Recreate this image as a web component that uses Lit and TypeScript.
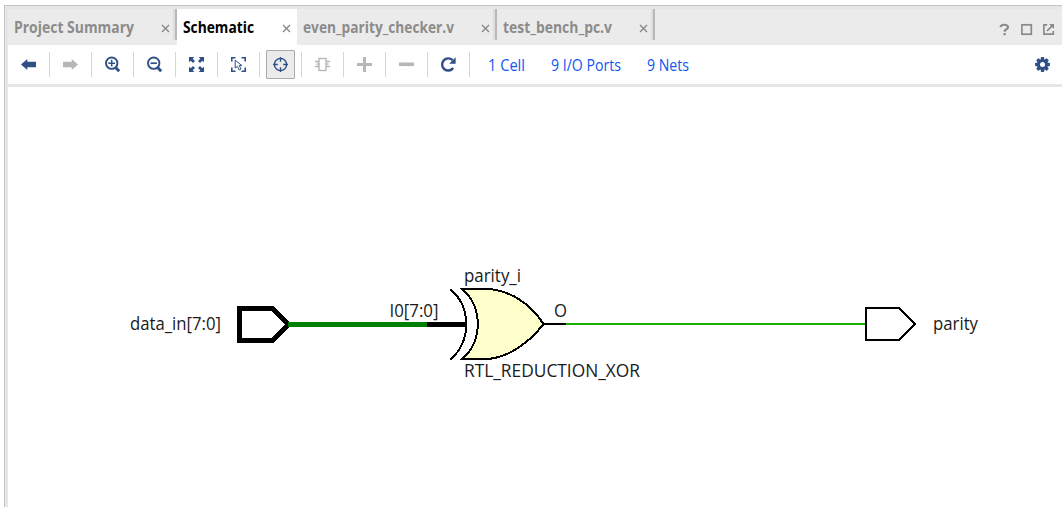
import { LitElement, html, svg, css } from "lit";
import { customElement } from "lit/decorators.js";
import { classMap } from "lit/directives/class-map.js";

const NAVY = "#2f4f87";
const GREY = "#b7b7b7";

/** Single line label fitted to a fixed advance width. */
const label = (text: string, width: number) => html`
  <svg class="label" width=${width + 2} height="24">
    <text x="0" y="18" textLength=${width} lengthAdjust="spacingAndGlyphs">${text}</text>
  </svg>`;

const icon = (body: unknown) => html`<svg class="icon" width="17" height="17" viewBox="0 0 17 17">${body}</svg>`;

const lens = svg`
  <circle cx="7.7" cy="7.2" r="5.7" fill="none" stroke=${NAVY} stroke-width="1.9"/>
  <path d="M11.8 11.8 L15.2 15.2" stroke=${NAVY} stroke-width="3"/>`;

const icons = {
  back: svg`<path d="M1 8.5 L7.3 3 V5.8 H16 V11.2 H7.3 V14 Z" fill=${NAVY}/>`,
  forward: svg`<path d="M16 8.5 L9.7 3 V5.8 H1 V11.2 H9.7 V14 Z" fill=${GREY}/>`,
  zoomIn: svg`${lens}<path d="M4.3 7.2 H11.1 M7.7 3.8 V10.6" stroke=${NAVY} stroke-width="1.5"/>`,
  zoomOut: svg`${lens}<path d="M4.5 7.2 H10.9" stroke=${NAVY} stroke-width="1.7"/>`,
  fit: svg`<path fill=${NAVY} d="M1 1H6.3L4.7 2.7L7 5L5 7L2.7 4.7L1 6.3Z M16 1V6.3L14.3 4.7L12 7L10 5L12.3 2.7L10.7 1Z M1 16V10.7L2.7 12.3L5 10L7 12L4.7 14.3L6.3 16Z M16 16H10.7L12.3 14.3L10 12L12 10L14.3 12.3L16 10.7Z"/>`,
  select: svg`
    <path d="M1.8 5.5V1.8H5.5 M11.5 1.8H15.2V5.5 M15.2 11.5V15.2H11.5 M5.5 15.2H1.8V11.5" fill="none" stroke=${NAVY} stroke-width="1.6"/>
    <path d="M5.2 4.2V12L7.3 10.4L9.2 14L11 13L9.2 9.6H11.9Z" fill="#fff" stroke=${NAVY} stroke-width="1"/>`,
  locate: svg`
    <circle cx="8.5" cy="8.5" r="6.1" fill="none" stroke=${NAVY} stroke-width="1.4"/>
    <path d="M8.5 1V5.8 M8.5 11.2V16 M1 8.5H5.8 M11.2 8.5H16" stroke=${NAVY} stroke-width="1.4"/>`,
  cell: svg`
    <rect x="5" y="2.5" width="7" height="12" fill="none" stroke=${GREY} stroke-width="1.4"/>
    <path d="M1 5.5H5 M1 10.5H5 M12 5.5H16 M12 10.5H16 M2.5 8H5 M12 8H14.5" stroke=${GREY} stroke-width="1.4"/>`,
  plus: svg`<path d="M1 8.5H16 M8.5 1V16" stroke=${GREY} stroke-width="3"/>`,
  minus: svg`<path d="M1 8.3H16" stroke=${GREY} stroke-width="3.6"/>`,
  refresh: svg`
    <path d="M13.2 12 A6.1 6.1 0 1 1 12.6 4.2" fill="none" stroke=${NAVY} stroke-width="2.4"/>
    <path d="M15.6 1.3V7.7H9.2Z" fill=${NAVY}/>`,
};

const tools: { name: string; body: unknown; on?: boolean }[] = [
  { name: "Back", body: icons.back },
  { name: "Forward", body: icons.forward },
  { name: "Zoom in", body: icons.zoomIn },
  { name: "Zoom out", body: icons.zoomOut },
  { name: "Fit", body: icons.fit },
  { name: "Select area", body: icons.select },
  { name: "Auto-fit selection", body: icons.locate, on: true },
  { name: "Expand cell", body: icons.cell },
  { name: "Add", body: icons.plus },
  { name: "Remove", body: icons.minus },
  { name: "Regenerate", body: icons.refresh },
];

@customElement("schematic-tabs")
class SchematicTabs extends LitElement {
  static styles = css`
    :host { display: flex; height: 36px; background: #ebebeb; }
    .tab { display: flex; box-sizing: border-box; height: 36px; padding-left: 6px; color: #8b8b8b; }
    .tab.active { background: #fff; color: #000; padding-right: 6px; }
    .label { display: block; margin-top: 6px; overflow: visible; font: bold 15.5px "Open Sans", sans-serif; fill: currentColor; }
    .fill { flex: 1; }
    .close { display: block; margin-top: 15px; width: 9px; height: 9px; }
    .rule { width: 2px; height: 31px; margin-left: 3px; background: #b9b9b9; border-left: 2px solid #dedede; }
    .s { width: 169px; } .c { width: 120px; } .e { width: 200px; } .t { width: 158px; }
    .controls { display: flex; gap: 9px; margin-left: auto; padding: 14px 7px 0 0; }
  `;
  render() {
    const tabs = [
      { text: "Project Summary", w: 120, size: "s" },
      { text: "Schematic", w: 71, size: "c", active: true },
      { text: "even_parity_checker.v", w: 151, size: "e" },
      { text: "test_bench_pc.v", w: 109, size: "t" },
    ];
    return html`
      ${tabs.map((t) => html`
        <div class=${classMap({ tab: true, active: !!t.active, [t.size]: true })}>
          ${label(t.text, t.w)}
          <span class="fill"></span>
          <svg class="close" viewBox="0 0 9 9"><path d="M1 1L8 8M8 1L1 8" stroke="#858585" stroke-width="1.3"/></svg>
          ${t.active ? "" : html`<span class="rule"></span>`}
        </div>`)}
      <div class="controls">
        <svg width="13" height="13" viewBox="0 0 13 13"><path d="M2.6 4.3C2.6 0.9 10 0.9 10 4.2C10 6.3 6.6 6.2 6.6 8.7M6.6 10V12.2" fill="none" stroke="#8a8a8a" stroke-width="2.2"/></svg>
        <svg width="13" height="13" viewBox="0 0 13 13"><rect x="1.9" y="1.8" width="9.4" height="9.4" fill="none" stroke="#8a8a8a" stroke-width="1.7"/></svg>
        <svg width="13" height="13" viewBox="0 0 13 13"><path d="M5.2 1.8H1.9V11.2H11.3V8M5 8L9.8 3.2" fill="none" stroke="#8a8a8a" stroke-width="1.7"/><path d="M7 1H12V6Z" fill="#8a8a8a"/></svg>
      </div>`;
  }
}

@customElement("schematic-toolbar")
class SchematicToolbar extends LitElement {
  static styles = css`
    :host { display: flex; height: 39px; background: #fff; border-bottom: 3px solid #e6e6e6; }
    .cell { display: flex; align-items: center; justify-content: center; width: 41px; height: 25px; margin-top: 7px; border-right: 1px solid #d6d6d6; }
    .tool { display: flex; align-items: center; justify-content: center; flex: none; box-sizing: border-box; width: 29px; height: 29px; }
    .tool.on { background: #ebebeb; border: 1px solid #aaa; border-radius: 1px; }
    .icon { display: block; }
    .links { display: flex; gap: 24px; margin: 8px 0 0 18px; color: #0f57f0; }
    .label { display: block; overflow: visible; font: 15.5px "Open Sans", sans-serif; fill: currentColor; }
    .gear { display: block; margin: 12px 12px 0 auto; }
  `;
  render() {
    return html`
      ${tools.map((t) => html`
        <div class="cell"><span class=${classMap({ tool: true, on: !!t.on })} aria-label=${t.name}>${icon(t.body)}</span></div>`)}
      <div class="links">${label("1 Cell", 37)}${label("9 I/O Ports", 70)}${label("9 Nets", 42)}</div>
      <svg class="gear" width="15" height="15" viewBox="0 0 15 15">
        <g fill=${NAVY}>
          ${[0, 45, 90, 135].map((a) => svg`<rect x="5.8" y="0.1" width="3.4" height="14.8" rx="0.7" transform="rotate(${a} 7.5 7.5)"/>`)}
          <circle cx="7.5" cy="7.5" r="5.5"/>
        </g>
        <circle cx="7.5" cy="7.5" r="2.5" fill="#fff"/>
      </svg>`;
  }
}

@customElement("schematic-canvas")
class SchematicCanvas extends LitElement {
  static styles = css`
    :host { display: block; flex: 1; background: #fff; }
    .sheet { display: block; }
    .text { font: 17.5px "Open Sans", sans-serif; fill: #1a1a1a; }
    .line { fill: none; stroke: #000; stroke-width: 2; }
    .bus { stroke-width: 5; }
    .busnet { stroke: #008000; }
    .net { stroke: #1cb000; }
    .body { fill: #ffffcc; }
  `;
  render() {
    const t = (text: string, x: number, y: number, w: number) =>
      svg`<text class="text" x=${x} y=${y} textLength=${w} lengthAdjust="spacingAndGlyphs">${text}</text>`;
    return html`
      <svg class="sheet" width="1054" height="420" viewBox="8 87 1054 420">
        <g shape-rendering="crispEdges">
          <path class="line bus" d="M239.5 308.5H272.5L288 324.5L272.5 340.5H239.5Z"/>
          <path class="line bus busnet" d="M288 324.5H427"/>
          <path class="line bus" d="M427 324.5H466"/>
          <path class="line body" d="M462 289H487C512 290 532 306 543.5 324C530 342 508 358 487 359H462C483 342 483 306 462 289Z"/>
          <path class="line" d="M450.5 289.5C471.5 307 471.5 341 450.5 359.5"/>
          <path class="line" d="M543 324H566"/>
          <path class="line net" d="M566 324H865"/>
          <path class="line" d="M866 308H899L915 324L899 340H866Z"/>
        </g>
        ${t("data_in[7:0]", 130, 330, 91)}
        ${t("I0[7:0]", 389.5, 317, 49)}
        ${t("parity_i", 464, 282, 57)}
        ${t("RTL_REDUCTION_XOR", 464, 377, 176)}
        ${t("O", 554, 317, 13)}
        ${t("parity", 933, 330, 45)}
      </svg>`;
  }
}

@customElement("app-root")
class AppRoot extends LitElement {
  static styles = css`
    :host { display: block; box-sizing: border-box; height: 507px; padding: 5px 0 0 4px; background: #fff; overflow: hidden; }
    .frame { display: flex; flex-direction: column; box-sizing: border-box; height: 502px; padding: 3px 0 0 3px; background: #e6e6e6; border-top: 1px solid #c4c4c4; border-left: 1px solid #c4c4c4; }
  `;
  render() {
    return html`
      <div class="frame">
        <schematic-tabs></schematic-tabs>
        <schematic-toolbar></schematic-toolbar>
        <schematic-canvas></schematic-canvas>
      </div>`;
  }
}
